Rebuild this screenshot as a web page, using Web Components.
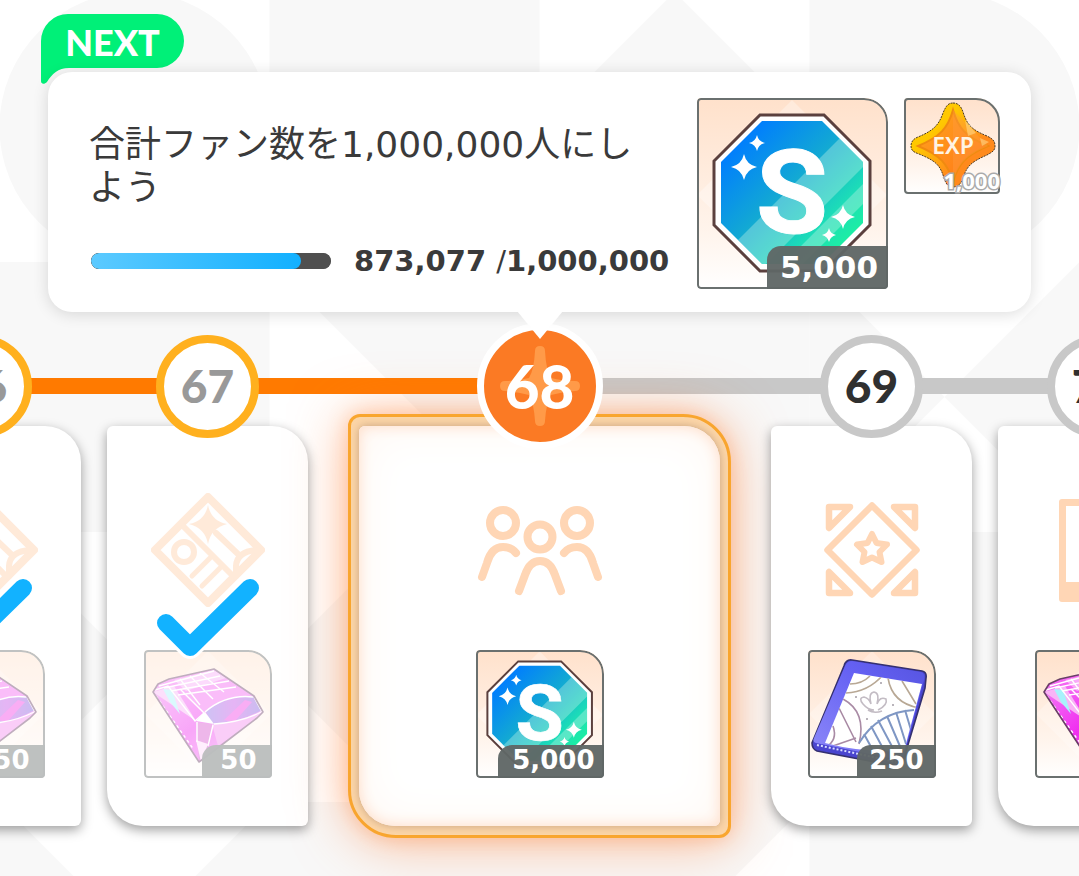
<!DOCTYPE html>
<html lang="ja">
<head>
<meta charset="utf-8">
<title>レベル報酬</title>
<style>
  html, body { margin: 0; background: #fff; }
  body { overflow: hidden; color: #3a3a3a; font-family: "DejaVu Sans", "Noto Sans CJK JP", sans-serif; }
</style>
</head>
<body>
<reward-stage>
  <mission-panel value="873077" max="1000000">
    合計ファン数を1,000,000人にしよう
    <reward-item slot="rewards" kind="token" amount="5,000" size="large"></reward-item>
    <reward-item slot="rewards" kind="exp" amount="1,000" size="small"></reward-item>
  </mission-panel>
  <level-step level="66" state="done" icon="ticket"><reward-item kind="gem" amount="50"></reward-item></level-step>
  <level-step level="67" state="done" icon="ticket"><reward-item kind="gem" amount="50"></reward-item></level-step>
  <level-step level="68" state="current" icon="fans"><reward-item kind="token" amount="5,000"></reward-item></level-step>
  <level-step level="69" state="locked" icon="stage"><reward-item kind="tablet" amount="250"></reward-item></level-step>
  <level-step level="70" state="locked" icon="frame"><reward-item kind="gem" amount="50"></reward-item></level-step>
</reward-stage>

<script>
const sparkle = (x, y, r) =>
  `<path fill="#fff" d="M${x} ${y - r}Q${x + r * .18} ${y - r * .18} ${x + r} ${y}Q${x + r * .18} ${y + r * .18} ${x} ${y + r}Q${x - r * .18} ${y + r * .18} ${x - r} ${y}Q${x - r * .18} ${y - r * .18} ${x} ${y - r}Z"/>`;

const ART = {
  token: `<svg viewBox="0 0 191 191" aria-hidden="true">
    <defs>
      <linearGradient id="g" gradientUnits="userSpaceOnUse" x1="35" y1="35" x2="155" y2="155"><stop offset=".05" stop-color="#007cff"/><stop offset=".45" stop-color="#12a8d4"/><stop offset=".75" stop-color="#1cdcb8"/><stop offset="1" stop-color="#1cf59c"/></linearGradient>
      <clipPath id="c"><path d="M65 23H125L166 64V125L125 166H65L24 125V64Z"/></clipPath>
    </defs>
    <path d="M95 2 190 97 95 191 0 97Z" fill="#fff" opacity=".3"/>
    <path d="M63 17H127L173 63V127L127 173H63L17 127V63Z" fill="#fff" stroke="#5b403e" stroke-width="3"/>
    <g clip-path="url(#c)">
      <path d="M0 0H191V191H0Z" fill="url(#g)"/>
      <path d="M183 0 0 183V235L235 0Z" fill="#c8f3e8" opacity=".36"/>
      <path d="M252 0 0 252V272L272 0Z" fill="#c8f3e8" opacity=".36"/>
    </g>
    <text x="95" y="135" text-anchor="middle" font-family="Roboto, sans-serif" font-weight="700" font-size="117" fill="#fff" stroke="#fff" stroke-width="1">S</text>
    ${sparkle(47, 69, 13)}${sparkle(60, 45, 8)}${sparkle(146, 119, 12)}${sparkle(132, 137, 7)}
  </svg>`,
  exp: `<svg viewBox="0 0 96 96" aria-hidden="true">
    <defs>
      <linearGradient id="o" x1="0" y1="0" x2="1" y2="1"><stop offset=".3" stop-color="#ffc800"/><stop offset=".65" stop-color="#ff8a1c"/></linearGradient>
      <linearGradient id="i" x1="0" y1="0" x2="1" y2="1"><stop offset="0" stop-color="#ffa51e"/><stop offset="1" stop-color="#ff7418"/></linearGradient>
    </defs>
    <path d="M49 5C54 5 57 8 59 14C63 26 66 31 83 38C89 41 91 43 91 48S88 54 83 57C67 64 63 68 59 80C57 86 54 89 49 89S42 86 40 80C36 67 32 63 15 56C9 54 7 52 7 48S9 41 14 39C31 32 35 26 39 15C42 8 44 5 49 5Z" fill="url(#o)" stroke="#4c3a24" stroke-width="1" stroke-dasharray="2 1"/>
    <path d="M49 12C54 30 62 39 84 48C62 57 54 66 49 84C44 66 36 57 14 48C36 39 44 30 49 12Z" fill="url(#i)" stroke="#f08a10" stroke-width="2"/>
    <path d="M49 12V84C54 66 62 57 84 48Z" fill="#ff9a40" opacity=".4"/>
    <path d="M61 22 72 35 64 38ZM76 40 85 44 78 48Z" fill="#ffe39a" opacity=".5"/>
    <text x="49" y="56" text-anchor="middle" font-family="Noto Sans, sans-serif" font-weight="600" font-size="23" fill="#fff4e4">EXP</text>
  </svg>`,
  gem: `<svg viewBox="0 0 128 128" aria-hidden="true">
    <defs>
      <linearGradient id="m" x1="0" y1="0" x2="1" y2="1"><stop offset="0" stop-color="#f58cf6"/><stop offset=".5" stop-color="#f02cf0"/><stop offset="1" stop-color="#f7a0f2"/></linearGradient>
      <linearGradient id="v" x1="0" y1="0" x2="1" y2="0"><stop offset="0" stop-color="#8d6fe4"/><stop offset=".5" stop-color="#c44fe8"/><stop offset="1" stop-color="#7d63dc"/></linearGradient>
    </defs>
    <path d="M64 1 127 64 64 127 1 64Z" fill="#fff" opacity=".25"/>
    <path d="M9 42 14 34 25 29 70 19 110 46 119 62 113 68 75 97 55 112Z" fill="url(#m)"/>
    <path d="M14 36 26 29 70 19 110 46Q82 45 61 64L36 42Z" fill="#f464f2"/>
    <path d="M30 30 70 20 82 28 42 41Z" fill="#fff" opacity=".45"/>
    <path d="M9 42 30 36 52 71Z" fill="#f9b4f6"/>
    <path d="M19 39 28 40 36 64 26 52Z" fill="#a8f2fb"/>
    <path d="M62 62Q84 43 110 47L118 60Q92 74 68 74Z" fill="url(#v)"/>
    <path d="M80 70 101 50 108 52 90 72Z" fill="#f23ee6"/>
    <path d="M68 74Q96 73 118 62L111 70 74 96Z" fill="#f48af0"/>
    <path d="M52 72 68 74 64 98 55 112Z" fill="#d856cf"/>
    <path d="M52 90 57 112 64 94Z" fill="#ffd9fb"/>
    <path d="M52 71 61 62 70 74Z" fill="#fff"/>
    <g fill="none" stroke="#fff" stroke-width="1.4">
      <path d="M11 40 24 36 51 71 60 63 36 39M61 62Q82 44 109 47M53 72V92M69 75 64 96M70 74Q98 72 117 62M15 36 70 21M20 38 76 26M27 41 85 31M34 45 92 37M36 29 56 55M46 26 69 49M56 23 80 42M110 47 118 62"/>
      <path d="M12 46 50 100" stroke-dasharray="3 3"/>
    </g>
    <path d="M9 42 14 34 25 29 70 19 110 46 119 62 113 68 75 97 55 112Z" fill="none" stroke="#6a4067" stroke-width="1.6" stroke-linejoin="round"/>
  </svg>`,
  tablet: `<svg viewBox="0 0 128 128" aria-hidden="true">
    <defs><linearGradient id="t" x1="0" y1="1" x2="1" y2="0"><stop offset="0" stop-color="#8e8af8"/><stop offset=".6" stop-color="#6662f4"/><stop offset="1" stop-color="#5654e0"/></linearGradient>
    <clipPath id="s"><path d="M46 23 114 34 96 101Q55 103 17 93Z"/></clipPath></defs>
    <path d="M64 1 127 64 64 127 1 64Z" fill="#fff" opacity=".25"/>
    <path d="M36 16Q38 9 44 10L114 21Q119 22 118 28L117 38 99 98Q96 118 88 116L9 101Q4 99 4 93Z" fill="#4a45cf" stroke="#353070" stroke-width="1.6"/>
    <path d="M37 16Q39 11 44 11L113 22Q118 24 116 30L96 104Q94 110 86 109L8 93Q4 92 6 88Z" fill="url(#t)"/>
    <path d="M46 23 114 34 96 101Q55 103 17 93Z" fill="#fff"/>
    <g clip-path="url(#s)" fill="none" stroke-width="1.6">
      <path d="M38 43Q60 42 75 25M42 34Q54 34 62 26M80 28Q84 53 111 58M94 31 108 54" stroke="#b8a895"/>
      <path d="M35 49Q59 62 51 94M31 58 48 92M25 76Q30 90 18 97M48 88 22 97" stroke="#a98ba5"/>
      <path d="M51 93Q70 62 106 60M56 84 68 106M63 76 78 104M70 70 88 104M79 66 94 101M88 62 98 94M97 60 103 80" stroke="#7f97c4" stroke-width="2"/>
      <path d="M66 60Q60 60 55 54Q50 48 56 47Q61 48 63 54Q60 43 66 42Q72 43 69 54Q72 46 78 49Q80 55 70 60M60 60Q66 64 74 61" stroke="#c3bcc4"/>
    </g>
    <path d="M47 47h2M72 33h2M84 55h2M58 69h2" stroke="#b9b4bb" stroke-width="2"/>
    <path d="M9 95 88 112" stroke="#d8dcff" stroke-width="2" stroke-dasharray="2 2"/>
  </svg>`
};

const ICONS = {
  ticket: `<svg viewBox="0 0 120 120" aria-hidden="true"><g fill="none" stroke="#ffd6b5" stroke-width="7" stroke-linecap="round" stroke-linejoin="round">
    <path d="M60 7 113 60 60 113 7 60Z" stroke-width="8"/><path d="M36 37 86 87" stroke-width="6"/><circle cx="36" cy="62" r="10" stroke-width="6"/>
    <path d="M62 68 44 86M72 78 54 96" stroke-width="5"/><path d="M68 43 90 64M88 86V76Q89 61 110 60" stroke-width="6"/></g>
    <path d="M60 15Q63 31 79 34Q63 38 60 54Q57 38 41 34Q57 31 60 15Z" fill="#ffd6b5"/></svg>`,
  fans: `<svg viewBox="0 0 120 120" aria-hidden="true"><g fill="none" stroke="#ffd6b5" stroke-width="8" stroke-linecap="round" stroke-linejoin="round">
    <circle cx="23" cy="33" r="13"/><circle cx="97" cy="33" r="13"/><circle cx="60" cy="47" r="12.5"/>
    <path d="M2 87 7 73C10 62 15 57 23 57C29 57 33 59 36 63M118 87 113 73C110 62 105 57 97 57C91 57 87 59 84 63M39 101 45 85C48 76 53 71 60 71S72 76 75 85L81 101"/></g></svg>`,
  stage: `<svg viewBox="0 0 120 120" aria-hidden="true"><g fill="none" stroke="#ffd6b5" stroke-width="6.5" stroke-linecap="round" stroke-linejoin="round">
    <path d="M60 15.500 104.500 60 60 104.500 15.500 60Z"/>
    <path d="M17 17H38L17 38ZM103 17H82L103 38ZM17 103H38L17 82ZM103 103H82L103 82Z"/>
    <path d="M60 44 64.500 53 75 54.500 67.500 62 69.500 72 60 67.500 50.500 72 52.500 62 45 54.500 55.500 53Z" stroke-width="6"/></g></svg>`,
  frame: `<svg viewBox="0 0 120 120" aria-hidden="true"><path fill="#ffd6b5" fill-rule="evenodd" d="M23 9H97Q100 9 100 12V109Q100 112 97 112H23Q20 112 20 109V12Q20 9 23 9ZM27 16V92H93V16ZM60 34Q62 52 80 54Q62 57 60 75Q58 57 40 54Q58 52 60 34Z"/></svg>`
};

class RewardItem extends HTMLElement {
  connectedCallback() {
    const kind = this.getAttribute('kind');
    this.attachShadow({ mode: 'open' }).innerHTML = `
      <style>
        :host { display: block; flex: none; width: 128px; height: 128px; }
        :host([size="large"]) { width: 191px; height: 191px; }
        :host([size="small"]) { width: 96px; height: 96px; }
        .box { position: relative; display: flex; box-sizing: border-box; width: 100%; height: 100%; overflow: hidden;
               border-radius: 4px 24px 4px 4px; background: linear-gradient(#ffe1cb, #fff4ec 70%, #fff); }
        .box::after { content: ""; position: absolute; inset: 0; border: 2px solid #6a706f; border-radius: inherit; }
        svg { width: 100%; height: 100%; }
        .amount { position: absolute; z-index: 1; right: 0; bottom: 0; box-sizing: border-box; height: 33px; padding: 0 9px 0 14px;
                  border-top-left-radius: 14px; background: rgba(96,103,102,.96); color: #fff;
                  font: bold 26px/30px "DejaVu Sans", sans-serif; }
        :host([kind="gem"]) .amount { padding: 0 15px 0 18px; }
        :host([kind="tablet"]) .amount { padding: 0 12px; }
        :host([size="large"]) .amount { height: 43px; padding: 0 10px 0 13px; font-size: 31px; line-height: 43px; }
        :host([size="small"]) .amount { height: 28px; padding: 0; background: none; font: bold 22px/28px "Noto Sans", sans-serif;
                  -webkit-text-stroke: 3px #aaa; paint-order: stroke fill; }
        :host([size="small"]) .box { overflow: visible; }
      </style>
      <div class="box">${ART[kind]}<span class="amount">${this.getAttribute('amount')}</span></div>`;
  }
}
customElements.define('reward-item', RewardItem);

class MissionPanel extends HTMLElement {
  connectedCallback() {
    const value = Number(this.getAttribute('value')), max = Number(this.getAttribute('max'));
    this.attachShadow({ mode: 'open' }).innerHTML = `
      <style>
        :host { display: block; position: relative; z-index: 3; }
        .panel { position: relative; display: flex; align-items: flex-start; gap: 16px; box-sizing: border-box; min-height: 240px;
                 padding: 26px 31px 23px 41px; border-radius: 24px; background: #fff; box-shadow: 0 2px 16px rgba(0,0,0,.14); }
        .pointer { position: absolute; top: 100%; left: 50%; width: 46px; height: 28px; margin: -1px 0 0 -23px; }
        .next { position: absolute; left: -7px; top: -58px; width: 143px; height: 72px; }
        .next svg { display: block; }
        .next b { position: absolute; inset: 0 0 auto; text-align: center; color: #fff; font: 900 36px/56px Lato, sans-serif; }
        .info { flex: 1; min-width: 0; padding: 25px 0 0; }
        p { margin: 0; padding-right: 24px; font-size: 36px; line-height: 43px; }
        .meter { display: flex; align-items: center; gap: 23px; margin-top: 34px; padding-left: 2px; height: 36px; white-space: nowrap; }
        progress { appearance: none; -webkit-appearance: none; flex: none; width: 240px; height: 16px; border: 0; border-radius: 8px; overflow: hidden; background: #4f4f4f; }
        progress::-webkit-progress-bar { background: #4f4f4f; border-radius: 8px; }
        progress::-webkit-progress-value { background: linear-gradient(90deg, #5ccaff, #12b0ff); border-radius: 8px; }
        output { font-size: 29px; font-weight: bold; }
        i { font-style: normal; font-weight: normal; }
      </style>
      <div class="next">
        <svg width="143" height="72" viewBox="0 0 143 72" aria-hidden="true"><path fill="#00f078" d="M27 0H116A27 27 0 0 1 116 54H28C17 54 11 60 6 68C3 71 0 70 0 67V27A27 27 0 0 1 27 0Z"/></svg>
        <b>NEXT</b>
      </div>
      <section class="panel">
        <div class="info">
          <p id="goal"><slot></slot></p>
          <div class="meter">
            <progress value="${value}" max="${max}" aria-labelledby="goal"></progress>
            <output>${value.toLocaleString('en-US')} <i>/</i>${max.toLocaleString('en-US')}</output>
          </div>
        </div>
        <slot name="rewards"></slot>
        <svg class="pointer" viewBox="0 0 46 28" aria-hidden="true"><path d="M0 0H46L23 28Z" fill="#fff"/></svg>
      </section>`;
  }
}
customElements.define('mission-panel', MissionPanel);

class LevelStep extends HTMLElement {
  connectedCallback() {
    const state = this.getAttribute('state');
    this.attachShadow({ mode: 'open' }).innerHTML = `
      <style>
        :host { display: flex; flex-direction: column; flex: none; width: 201px; }
        :host([state="current"]) { width: 383px; margin: 0 14px; }
        .head { position: relative; z-index: 2; display: flex; align-items: center; justify-content: center; height: 126px; margin-bottom: -23px; }
        .node { display: grid; place-items: center; box-sizing: border-box; width: 103px; height: 103px; border: 8px solid #c8c8c8;
                border-radius: 50%; background: #fff; color: #303030; font: 900 46px/1 Lato, sans-serif; }
        .node > * { grid-area: 1 / 1; }
        :host([state="done"]) .node { border-color: #ffb01e; color: #999; }
        :host([state="current"]) .node { width: 126px; height: 126px; border: 7px solid #fff; background: #fb7a24; color: #fff; font-size: 60px; }
        .frame { position: relative; }
        .card { position: relative; display: flex; flex-direction: column; align-items: center; gap: 40px; box-sizing: border-box; min-height: 400px;
                padding: 64px 0 48px; border-radius: 6px 36px 6px 36px; background: #fff; box-shadow: 0 4px 12px rgba(0,0,0,.38); }
        :host([state="current"]) .frame { margin-top: -12px; padding: 9px 8px; border: 3px solid #f9a62f; border-radius: 12px 48px 12px 48px;
                background: #fcd6a8; box-shadow: 0 4px 56px rgba(255,124,50,.5), 0 0 20px rgba(255,140,70,.35); }
        :host([state="current"]) .card { box-shadow: 0 0 9px rgba(150,110,90,.5), inset 0 0 14px #ffdcc6, inset 0 0 50px #fff6f0; }
        .icon { width: 120px; height: 120px; }
        .icon svg { display: block; overflow: visible; }
        slot { display: block; }
        :host([state="done"]) .icon { opacity: .5; }
        :host([state="done"]) slot { opacity: .42; }
        .check { position: absolute; top: 144px; left: 50%; width: 120px; height: 94px; margin-left: -60px; }
      </style>
      <div class="head"><div class="node">
        ${state === 'current' ? '<svg width="80" height="80" viewBox="0 0 80 80" aria-hidden="true"><path fill="#ff9a48" d="M35 5Q35 0 40 0T45 5Q46 24 51 32Q62 35 75 35Q80 35 80 40T75 45Q62 46 51 49Q46 58 45 75Q45 80 40 80T35 75Q34 58 29 49Q18 46 5 45Q0 45 0 40T5 35Q18 35 29 32Q34 24 35 5Z"/></svg>' : ''}
        <span>${this.getAttribute('level')}</span></div></div>
      <div class="frame"><div class="card">
        <div class="icon">${ICONS[this.getAttribute('icon')]}</div>
        <slot></slot>
        ${state === 'done' ? '<svg class="check" viewBox="0 0 120 94" role="img" aria-label="達成"><g fill="none" stroke-linecap="round" stroke-linejoin="round"><path d="M18 53 42 77 102 18" stroke="#fff" stroke-width="24"/><path d="M18 53 42 77 102 18" stroke="#12b2ff" stroke-width="18"/></g></svg>' : ''}
      </div></div>`;
  }
}
customElements.define('level-step', LevelStep);

class RewardStage extends HTMLElement {
  connectedCallback() {
    this.attachShadow({ mode: 'open' }).innerHTML = `
      <style>
        :host { display: grid; grid-template-columns: minmax(0, 1fr); min-height: 100vh; overflow: hidden; }
        .backdrop, main { grid-area: 1 / 1; }
        .backdrop { width: 100%; height: 100%; min-height: 0; }
        main { position: relative; padding-top: 72px; }
        ::slotted(mission-panel) { margin: 0 48px; }
        .road { display: grid; grid-template-columns: minmax(0, 1fr); margin-top: 11px; }
        .rail, .steps { grid-area: 1 / 1; }
        .rail { height: 16px; margin-top: 55px; background: linear-gradient(90deg, #ff7a00 50%, #c8c8c8 50%); }
        .steps { position: relative; display: flex; justify-content: center; gap: 26px; padding-bottom: 38px; }
      </style>
      <svg class="backdrop" viewBox="0 0 1080 876" preserveAspectRatio="xMidYMin slice" aria-hidden="true">
        <path fill="#fff" d="M0 0H1080V876H0Z"/>
        <g fill="#f8f8f8">
          <circle cx="135" cy="127" r="135"/>
          <path d="M270 0H540V262H270ZM675 -8 810 127V262H540V127ZM810 -8H945A135 135 0 0 1 945 262H810Z"/>
          <path d="M0 262H270V532H0ZM270 262H540V532ZM540 262H810V532H540Z"/>
          <path d="M810 262 945 397 810 532ZM1080 262 945 397 1080 532Z"/>
          <path d="M270 667 405 532H540V802H405ZM540 532H1080V802H540ZM0 532 135 667 0 802ZM270 532 135 667 270 802Z"/>
          <path d="M0 802 74 876H0ZM270 802H540V876H196ZM540 802H810L736 876H540ZM810 802H1080V876H810Z"/>
        </g>
      </svg>
      <main>
        <slot name="mission"></slot>
        <div class="road"><div class="rail"></div><div class="steps"><slot></slot></div></div>
      </main>`;
    this.querySelector('mission-panel').slot = 'mission';
  }
}
customElements.define('reward-stage', RewardStage);
</script>
</body>
</html>
